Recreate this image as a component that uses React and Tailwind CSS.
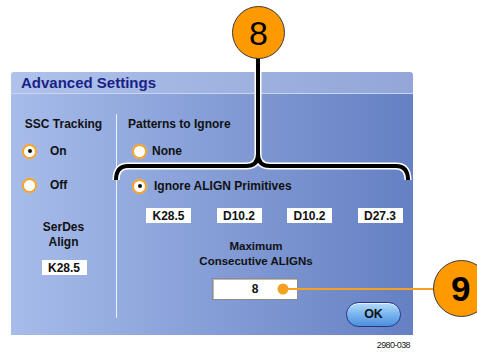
import React from "react";

const Radio = ({ checked }) => (
  <div className="w-[15px] h-[15px] rounded-full bg-white border-2 border-[#f2a42c] shadow-[0_0_1px_#f7c060] flex items-center justify-center shrink-0">
    {checked && <div className="w-[4px] h-[4px] rounded-full bg-[#111]" />}
  </div>
);

const Tag = ({ children, className = "" }) => (
  <div
    className={
      "w-[45px] h-[15px] bg-white flex items-center justify-center text-[12px] leading-none font-bold text-[#111] " +
      className
    }
  >
    {children}
  </div>
);

export default function App() {
  return (
    <div className="relative w-[477px] h-[352px] bg-white overflow-hidden font-['Liberation_Sans',Arial,sans-serif]">
      <div className="pt-[72px] pl-[11px]">
        {/* DIALOG */}
        <div className="w-[402px] h-[263px] flex flex-col rounded-tl-[3px] rounded-tr-[3px] overflow-hidden">
          {/* TITLE */}
          <div className="h-[22px] bg-linear-to-r from-[#afc2ea] to-[#92a6d8] border-b border-[#c9d5f0] flex items-center pl-[10px]">
            <span className="text-[15px] font-bold text-[#1c1f87] leading-none">
              Advanced Settings
            </span>
          </div>

          {/* BODY */}
          <div className="flex-1 flex bg-linear-to-r from-[#a7bcea] to-[#6580c3] text-[#111] font-bold">
            {/* LEFT COLUMN */}
            <div className="w-[105px] flex flex-col">
              <div className="mt-[23px] h-[14px] leading-[14px] text-[12px] text-center">
                SSC Tracking
              </div>
              <div className="mt-[12px] h-[16px] flex items-center pl-[11px] gap-[13px] text-[12px]">
                <Radio checked />
                <span>On</span>
              </div>
              <div className="mt-[18px] h-[16px] flex items-center pl-[11px] gap-[13px] text-[12px]">
                <Radio />
                <span>Off</span>
              </div>
              <div className="mt-[27px] text-[12px] leading-[15px] text-center">
                SerDes
                <br />
                Align
              </div>
              <div className="mt-[10px] flex justify-center pl-[1px]">
                <Tag>K28.5</Tag>
              </div>
            </div>

            {/* DIVIDER */}
            <div className="mt-[20px] mb-[17px] w-px bg-[#eef2fb]" />

            {/* RIGHT COLUMN */}
            <div className="flex-1 flex flex-col">
              <div className="mt-[23px] h-[14px] leading-[14px] text-[12px] pl-[11px]">
                Patterns to Ignore
              </div>
              <div className="mt-[12px] h-[16px] flex items-center pl-[15px] gap-[5px] text-[12px]">
                <Radio />
                <span>None</span>
              </div>
              <div className="mt-[19px] h-[16px] flex items-center pl-[15px] gap-[7px] text-[12px]">
                <Radio checked />
                <span>Ignore ALIGN Primitives</span>
              </div>
              <div className="mt-[14px] flex pl-[29px] gap-[25.5px]">
                <Tag>K28.5</Tag>
                <Tag>D10.2</Tag>
                <Tag>D10.2</Tag>
                <Tag>D27.3</Tag>
              </div>
              <div className="mt-[16px] ml-[69px] w-[140px] text-[11.5px] leading-[15px] text-center">
                Maximum
                <br />
                Consecutive ALIGNs
              </div>
              <div className="mt-[9px] ml-[95px] w-[86px] h-[22px] bg-white border border-[#8a8a8a] shadow-[inset_1px_1px_0_#bbb] flex items-center justify-center text-[12px]">
                8
              </div>
              <div className="mt-[2px] self-end mr-[12px] w-[55px] h-[25px] rounded-full border border-[#27368a] bg-linear-to-b from-[#b5dcfa] via-[#79b4ee] to-[#4c8fdc] flex items-center justify-center text-[12.5px] text-[#111] shadow-[inset_0_1px_0_#e4f3ff]">
                OK
              </div>
            </div>
          </div>
        </div>

        {/* FIGURE NUMBER */}
        <div className="w-[399px] mt-[5px] text-right text-[9px] leading-[10px] tracking-[-0.6px] text-[#222] font-['Liberation_Sans_Narrow','Liberation_Sans',sans-serif]">
          2980-038
        </div>
      </div>

      {/* CALLOUT LINES */}
      <svg
        className="absolute inset-0 pointer-events-none"
        width="477"
        height="352"
        viewBox="0 0 477 352"
      >
        <path
          d="M258 58 L258 154 Q258 166 246 166 L128 166 Q116 166 116 180 M258 154 Q258 166 270 166 L396 166 Q408 166 408 180"
          fill="none"
          stroke="#fff"
          strokeWidth="7"
        />
        <path
          d="M258 58 L258 154 Q258 166 246 166 L128 166 Q116 166 116 180 M258 154 Q258 166 270 166 L396 166 Q408 166 408 180"
          fill="none"
          stroke="#000"
          strokeWidth="4"
        />
        <line x1="283" y1="289" x2="436" y2="289" stroke="#f5a020" strokeWidth="2" />
        <circle cx="283" cy="289" r="5.5" fill="#f5a020" />
      </svg>

      {/* CALLOUT 8 */}
      <div className="absolute left-[232px] top-[6px] w-[53px] h-[53px] rounded-full bg-[#ff9900] border border-[#3a3a3a] flex items-center justify-center text-[34px] leading-none text-black font-['Liberation_Sans',Arial,sans-serif]">
        8
      </div>

      {/* CALLOUT 9 */}
      <div className="absolute left-[433px] top-[260px] w-[57px] h-[57px] rounded-full bg-[#ff9900] border border-[#3a3a3a] flex items-center pl-[17px] text-[35px] leading-none font-bold text-black font-['Liberation_Sans',Arial,sans-serif]">
        9
      </div>
    </div>
  );
}
